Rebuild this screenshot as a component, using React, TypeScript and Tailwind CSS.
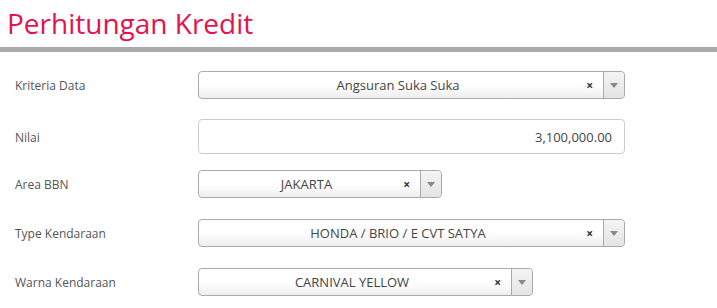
import React from "react";

type SelectProps = { value: string; width: string };

function Select2({ value, width }: SelectProps) {
  return (
    <div className={`${width} h-[28px] flex rounded-[4px] border border-[#aaaaaa] bg-linear-to-b from-white from-50% to-[#eeeeee] text-[13px] text-[#444]`}>
      <div className="flex-1 flex items-center justify-center pl-3 pr-[18px] pt-[2px] relative">
        <span>{value}</span>
        <span className="absolute right-[10px] top-1/2 -translate-y-1/2 mt-[1px] text-[12px] font-bold text-[#333] leading-none">×</span>
      </div>
      <div className="w-[21px] border-l border-[#aaaaaa] flex items-center justify-center bg-linear-to-b from-[#f4f4f4] to-[#e4e4e4] rounded-r-[4px]">
        <svg width="8" height="5" viewBox="0 0 8 5">
          <path d="M0 0h8L4 5z" fill="#888" />
        </svg>
      </div>
    </div>
  );
}

function Row({ label, children, className = "" }: { label: string; children: React.ReactNode; className?: string }) {
  return (
    <div className={`flex items-center ${className}`}>
      <label className="w-[198px] pl-[15px] pt-[2px] text-[12px] text-[#555]">{label}</label>
      {children}
    </div>
  );
}

export default function App() {
  return (
    <div className="w-[717px] h-[308px] bg-white overflow-hidden" style={{ fontFamily: '"Open Sans", sans-serif' }}>
      <h1 className="pl-[7px] pt-[3px] text-[28px] leading-[40px] text-[#e5124d]">Perhitungan Kredit</h1>
      <div className="mt-[4px] h-[5px] bg-[#aaaaaa]" />
      <div className="pt-[19px] flex flex-col">
        <Row label="Kriteria Data">
          <Select2 value="Angsuran Suka Suka" width="w-[427px]" />
        </Row>
        <Row label="Nilai" className="mt-[20px]">
          <div className="w-[427px] h-[35px] rounded-[4px] border border-[#cccccc] flex items-center justify-end px-[12px] pt-[2px] text-[13px] text-[#444]">
            3,100,000.00
          </div>
        </Row>
        <Row label="Area BBN" className="mt-[16px]">
          <Select2 value="JAKARTA" width="w-[244px]" />
        </Row>
        <Row label="Type Kendaraan" className="mt-[21px]">
          <Select2 value="HONDA / BRIO / E CVT SATYA" width="w-[427px]" />
        </Row>
        <Row label="Warna Kendaraan" className="mt-[21px]">
          <Select2 value="CARNIVAL YELLOW" width="w-[335px]" />
        </Row>
      </div>
    </div>
  );
}
